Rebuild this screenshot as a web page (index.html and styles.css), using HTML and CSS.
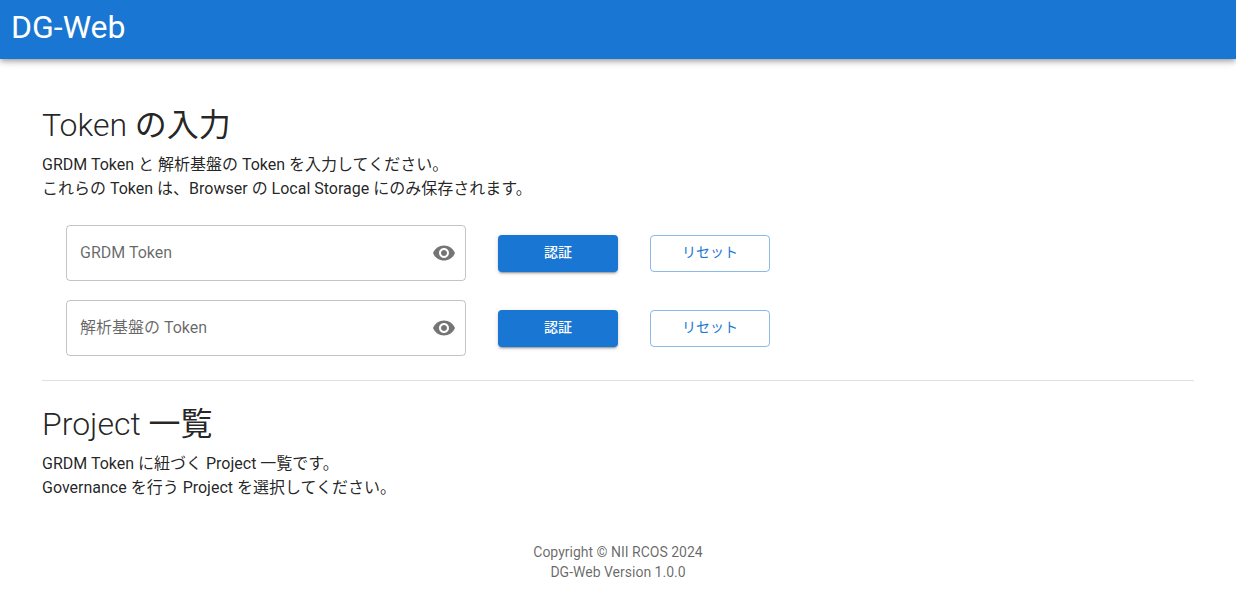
FILE: index.html
```html
<!DOCTYPE html>
<html lang="ja">
<head>
<meta charset="utf-8">
<meta name="viewport" content="width=device-width, initial-scale=1">
<title>DG-Web</title>
<link rel="stylesheet" href="styles.css">
</head>
<body>
<header class="app-bar"><div class="brand">DG-Web</div></header>
<main class="content">
  <section class="section">
    <h1 class="heading">Token <span class="heading-ja">の入力</span></h1>
    <p class="text">GRDM Token と 解析基盤の Token を入力してください。<br>これらの Token は、Browser の Local Storage にのみ保存されます。</p>
    <div class="forms">
      <form class="token-row">
        <div class="field">
          <input class="field-input" type="password" id="grdm" placeholder="GRDM Token" aria-label="GRDM Token">
          <button class="icon-button" type="button" aria-label="表示"><svg class="icon" viewBox="0 0 24 24"><path d="M12 4.500C7 4.500 2.730 7.610 1 12c1.730 4.390 6 7.500 11 7.500s9.270-3.110 11-7.500c-1.730-4.390-6-7.500-11-7.500M12 17c-2.760 0-5-2.240-5-5s2.240-5 5-5 5 2.240 5 5-2.240 5-5 5m0-8c-1.660 0-3 1.340-3 3s1.340 3 3 3 3-1.340 3-3-1.340-3-3-3"/></svg></button>
        </div>
        <button class="button button-primary" type="button">認証</button>
        <button class="button button-outlined" type="button">リセット</button>
      </form>
      <form class="token-row">
        <div class="field">
          <input class="field-input" type="password" id="analysis" placeholder="解析基盤の Token" aria-label="解析基盤の Token">
          <button class="icon-button" type="button" aria-label="表示"><svg class="icon" viewBox="0 0 24 24"><path d="M12 4.500C7 4.500 2.730 7.610 1 12c1.730 4.390 6 7.500 11 7.500s9.270-3.110 11-7.500c-1.730-4.390-6-7.500-11-7.500M12 17c-2.760 0-5-2.240-5-5s2.240-5 5-5 5 2.240 5 5-2.240 5-5 5m0-8c-1.660 0-3 1.340-3 3s1.340 3 3 3 3-1.340 3-3-1.340-3-3-3"/></svg></button>
        </div>
        <button class="button button-primary" type="button">認証</button>
        <button class="button button-outlined" type="button">リセット</button>
      </form>
    </div>
  </section>
  <hr class="divider">
  <section class="section">
    <h1 class="heading">Project <span class="heading-ja">一覧</span></h1>
    <p class="text">GRDM Token に紐づく Project 一覧です。<br>Governance を行う Project を選択してください。</p>
  </section>
</main>
<footer class="footer">Copyright © NII RCOS 2024<br>DG-Web Version 1.0.0</footer>
</body>
</html>
```

FILE: styles.css
```css
* { box-sizing: border-box; }
body {
  margin: 0;
  background: #fff;
  color: rgba(0, 0, 0, 0.87);
  font-family: Roboto, "Noto Sans CJK JP", sans-serif;
  font-size: 16px;
  line-height: 24px;
}
.app-bar {
  padding: 7px 11px 12px;
  background: #1976d2;
  color: #fff;
  box-shadow: 0 2px 4px -1px rgba(0,0,0,.2), 0 4px 5px rgba(0,0,0,.14), 0 1px 10px rgba(0,0,0,.12);
}
.brand { font-size: 32px; line-height: 40px; font-weight: 400; }
.content { padding: 46px 42px 0; }
.heading {
  margin: 0 0 8px;
  font-size: 32px;
  line-height: 40px;
  font-weight: 300;
}
.heading-ja { font-weight: 400; }
.text { margin: 0; }
.forms {
  display: grid;
  gap: 19px;
  padding: 24px 24px 0;
}
.token-row { display: flex; flex-wrap: wrap; align-items: center; gap: 16px 32px; }
.field {
  display: flex;
  align-items: center;
  width: 400px;
  max-width: 100%;
  height: 56px;
  padding: 0 9px 0 13px;
  border: 1px solid rgba(0, 0, 0, 0.23);
  border-radius: 4px;
}
.field-input {
  flex: 1;
  min-width: 0;
  padding: 0;
  border: 0;
  outline: 0;
  font: inherit;
  background: none;
}
.field-input::placeholder { color: rgba(0, 0, 0, 0.6); opacity: 1; }
.icon-button {
  display: flex;
  padding: 0;
  border: 0;
  background: none;
  color: rgba(0, 0, 0, 0.54);
}
.icon { width: 24px; height: 24px; fill: currentColor; }
.button {
  width: 120px;
  height: 37px;
  padding: 0 0 2px;
  border: 0;
  border-radius: 4px;
  font-family: inherit;
  font-size: 14px;
  font-weight: 500;
  line-height: 24px;
}
.button-primary {
  background: #1976d2;
  color: #fff;
  box-shadow: 0 3px 1px -2px rgba(0,0,0,.2), 0 2px 2px rgba(0,0,0,.14), 0 1px 5px rgba(0,0,0,.12);
}
.button-outlined {
  border: 1px solid rgba(25, 118, 210, 0.5);
  background: none;
  color: #1976d2;
  font-weight: 400;
}
.divider { margin: 24px 0 23px; border: 0; border-top: 1px solid rgba(0, 0, 0, 0.12); }
.footer {
  padding: 42px 0 18px;
  color: rgba(0, 0, 0, 0.6);
  font-size: 14px;
  line-height: 20px;
  text-align: center;
}
```
